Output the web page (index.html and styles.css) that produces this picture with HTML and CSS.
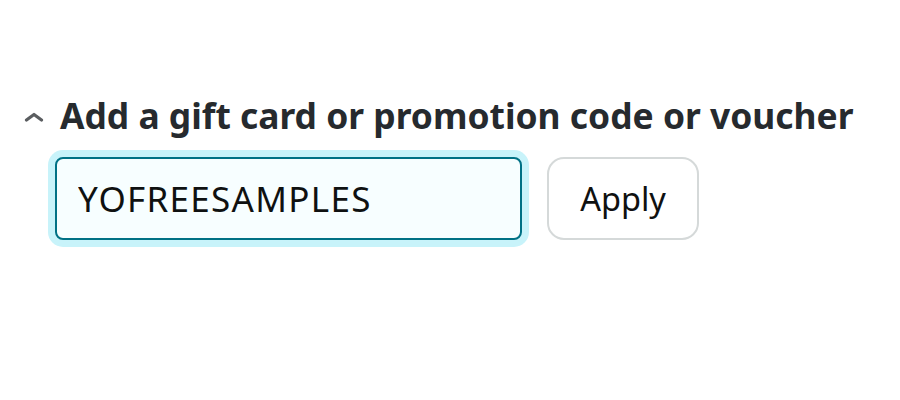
FILE: index.html
```html
<!DOCTYPE html>
<html lang="en">
<head>
  <meta charset="UTF-8" />
  <title>Gift card or promotion code</title>
  <meta name="viewport" content="width=device-width, initial-scale=1.0" />
  <link rel="stylesheet" href="styles.css">
</head>
<body>

  <div class="promo">
    <div class="promo-header">
      <svg class="chevron" width="20" height="10" viewBox="0 0 20 10">
        <path d="M2.5 8 L10 2.5 L17.5 8" fill="none" stroke="#5a5d60" stroke-width="3.2" stroke-linecap="round" stroke-linejoin="round"/>
      </svg>
      <h2>Add a gift card or promotion code or voucher</h2>
    </div>

    <form class="promo-form">
      <div class="input-wrap">
        <input type="text" class="promo-input" value="YOFREESAMPLES" />
      </div>
      <button type="button" class="apply-btn">Apply</button>
    </form>
  </div>

</body>
</html>
```

FILE: styles.css
```css
body {
  margin: 0;
  padding: 0;
  background: #ffffff;
  font-family: 'Noto Sans', 'Open Sans', Arial, sans-serif;
  color: #0f1111;
}

.promo {
  padding: 94px 0 0 24px;
}

.promo-header {
  display: flex;
  align-items: center;
  gap: 16px;
}

.chevron {
  display: block;
  margin-top: 3px;
}

h2 {
  margin: 0;
  font-size: 35.4px;
  font-weight: 700;
  line-height: 42px;
  color: #262a2e;
}

.promo-form {
  display: flex;
  align-items: center;
  gap: 18px;
  margin: 14px 0 0 24px;
}

/* focus glow round the field */
.input-wrap {
  padding: 7px;
  border-radius: 15px;
  background: #c8f3fa;
}

.promo-input {
  display: block;
  box-sizing: border-box;
  width: 467px;
  height: 83px;
  padding: 0 21px;
  border: 2px solid #007185;
  border-radius: 8px;
  background: #f7feff;
  outline: none;
  font-family: inherit;
  font-size: 35px;
  letter-spacing: 1.3px;
  color: #0f1111;
}

.apply-btn {
  box-sizing: border-box;
  width: 152px;
  height: 83px;
  border: 2px solid #d5d9d9;
  border-radius: 17px;
  background: #ffffff;
  font-family: inherit;
  font-size: 32.5px;
  color: #0f1111;
  cursor: pointer;
}
```
